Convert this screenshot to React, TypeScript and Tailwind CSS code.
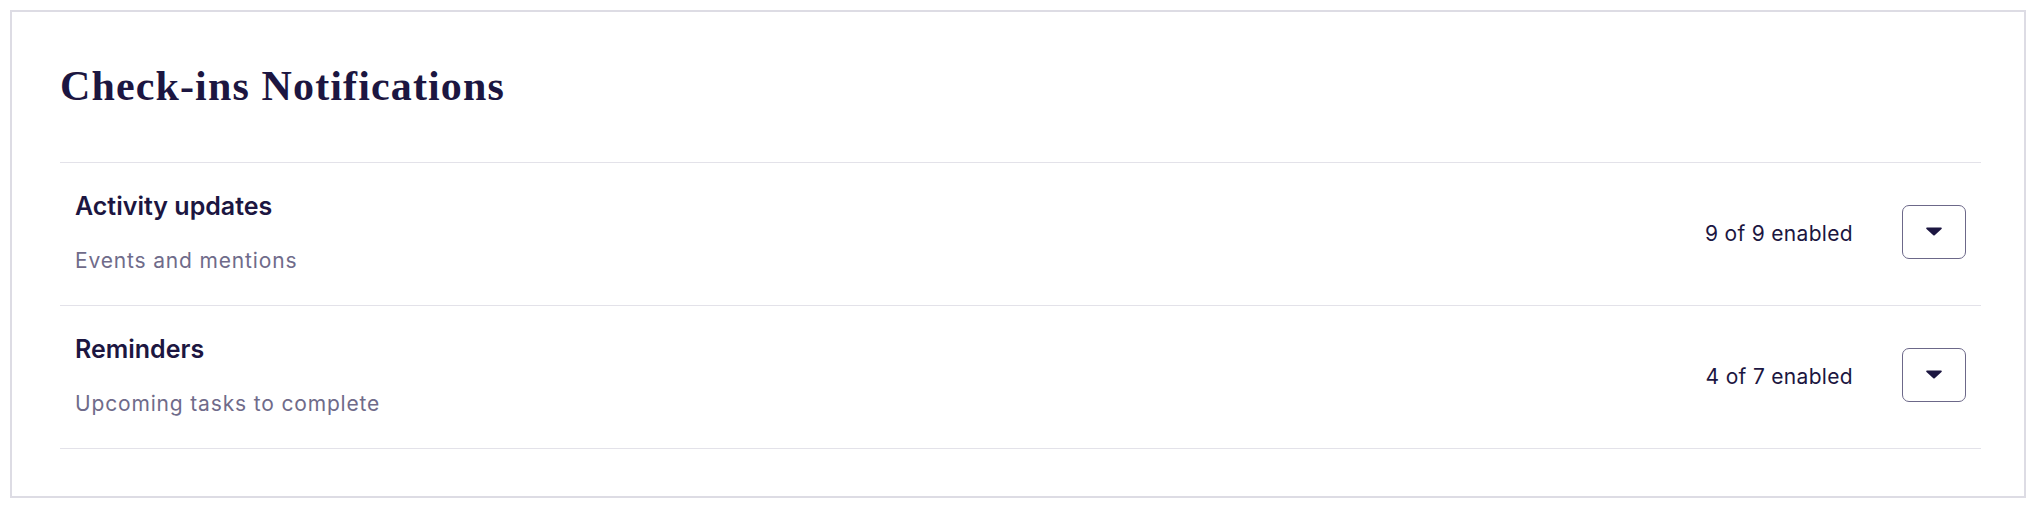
import React from 'react'

type Group = {
  id: string
  title: string
  description: string
  enabled: number
  total: number
}

const groups: Group[] = [
  {
    id: 'activity',
    title: 'Activity updates',
    description: 'Events and mentions',
    enabled: 9,
    total: 9,
  },
  {
    id: 'reminders',
    title: 'Reminders',
    description: 'Upcoming tasks to complete',
    enabled: 4,
    total: 7,
  },
]

const Caret = () => (
  <svg width="16" height="9" viewBox="0 0 16 9" fill="#1c1641">
    <path d="M1.2 0.5h13.6c0.9 0 1.3 1 0.7 1.6L8.7 8.2c-0.4 0.4-1 0.4-1.4 0L0.5 2.1C-0.1 1.5 0.3 0.5 1.2 0.5z" />
  </svg>
)

const GroupRow = ({ group }: { group: Group }) => {
  return (
    <div className="flex items-center justify-between border-t border-[#e3e2e9] h-[143px] pl-[15px] pr-[15px]">
      <div className="flex flex-col mb-[3px]">
        <p className="text-[25px] leading-[32px] font-semibold text-[#1c1641]">
          {group.title}
        </p>
        <p className="mt-[25px] text-[21px] leading-[28px] tracking-[0.04em] text-[#6f6b8a]">
          {group.description}
        </p>
      </div>
      <div className="flex items-center">
        <span className="text-[21px] leading-[28px] tracking-[0.015em] text-[#1c1641]">
          {group.enabled} of {group.total} enabled
        </span>
        <button className="ml-[49px] mb-[5px] flex items-center justify-center w-[64px] h-[54px] rounded-[7px] border-[1.5px] border-[#6c6889] bg-white">
          <Caret />
        </button>
      </div>
    </div>
  )
}

const App: React.FC = () => {
  return (
    <div
      className="bg-white min-h-screen pt-[10px] pl-[10px] pr-[12px]"
      style={{ fontFamily: 'Inter, "Open Sans", sans-serif' }}
    >
      <div className="border-2 border-[#dddce4] bg-white pt-[49px] pb-[47px] pl-[48px] pr-[43px]">
        <h1
          className="text-[42px] leading-[50px] font-bold text-[#1c1641] tracking-[0.027em]"
          style={{ fontFamily: '"Liberation Serif", serif' }}
        >
          Check-ins Notifications
        </h1>
        <div className="mt-[51px] border-b border-[#e3e2e9]">
          {groups.map((g) => (
            <GroupRow key={g.id} group={g} />
          ))}
        </div>
      </div>
    </div>
  )
}

export default App
